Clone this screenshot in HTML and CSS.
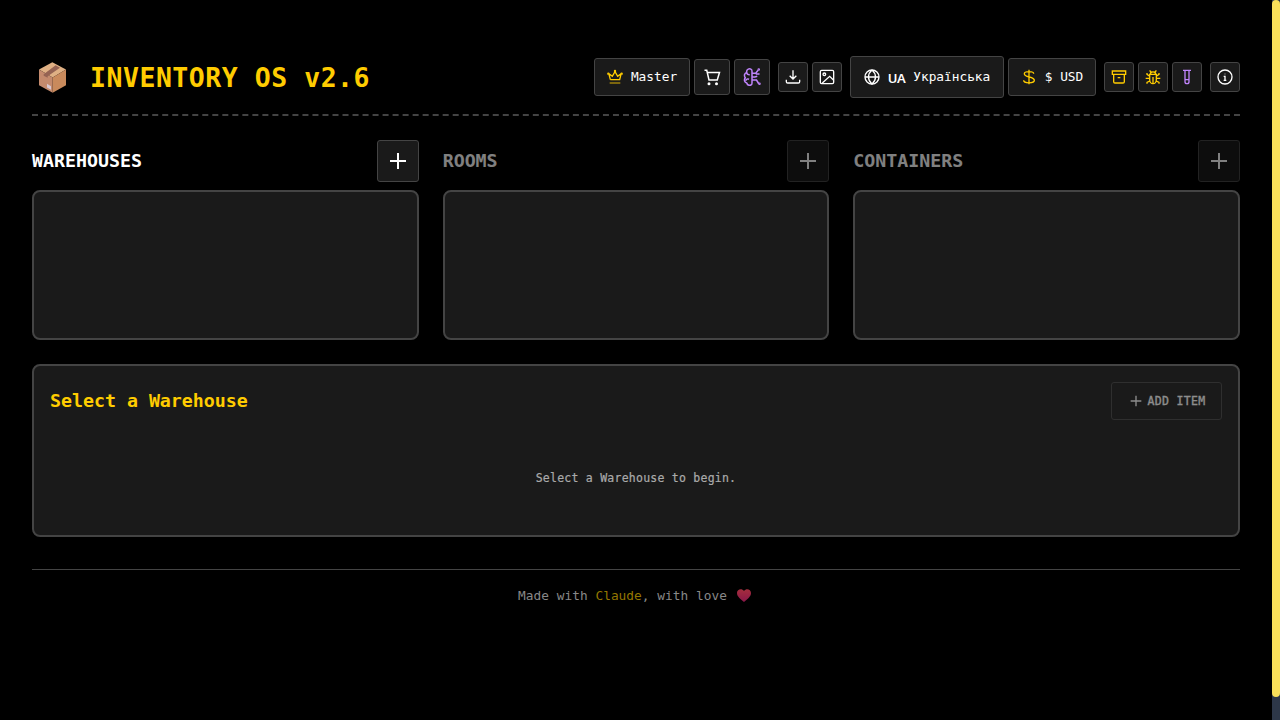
FILE: index.html
```html
<!DOCTYPE html>
<html lang="uk">
<head>
<meta charset="utf-8">
<title>Inventory OS</title>
<link rel="stylesheet" href="styles.css">
</head>
<body>
<main class="page">
  <header class="top">
    <svg class="box" viewBox="0 0 81 92"><path fill="#dfb084" d="M40 0 81 22 41 46 0 22Z"/><path fill="#c48a6d" d="M0 22 41 46V92L0 69Z"/><path fill="#c98a5c" d="M81 22 41 46V92L81 69Z"/><path fill="#956353" d="m14 36 36-27 13 8-37 25v5l-12-6Z"/><path fill="#d8c8d2" d="m24 65 12 7v11l-12-7Z"/></svg>
    <h1>INVENTORY OS v2.6</h1>
    <div class="tools">
      <button class="btn master"><svg class="gold" viewBox="0 0 24 24"><path d="M5 16 3 8M21 8l-2 8H5M3 7l5 4 4-7 4 7 5-4"/><path opacity=".65" d="M4 21h16"/><circle cx="2" cy="7" r=".8"/><circle cx="12" cy="3" r=".8"/><circle cx="22" cy="7" r=".8"/></svg><span>Master</span></button>
      <button class="btn medium"><svg class="cart" viewBox="0 0 24 24"><path d="M2 3h3l3 13h11l3-10H6"/><circle cx="8" cy="21" r="1"/><circle cx="18" cy="21" r="1"/></svg></button>
      <button class="btn medium violet"><svg class="brain" viewBox="0 0 24 24"><path d="M12 3v18M12 3C9-1 4 2 5 6c-3 1-4 4-2 7-2 3-1 6 2 7 1 4 6 4 7 1M5 6c0 2 2 3 4 3M4 17c0-2 2-3 4-2M12 7h5l3-4M12 12h4M17 8h5M12 16h6l3 5M16 12l3-1"/><circle cx="21" cy="2" r=".7"/><circle cx="22" cy="21" r=".7"/></svg></button>
      <button class="btn small gap"><svg viewBox="0 0 24 24"><path d="M12 2v12M7 10l5 5 5-5M2 16v3q0 2 2 2h16q2 0 2-2v-3"/></svg></button>
      <button class="btn small"><svg viewBox="0 0 24 24"><rect x="2" y="2" width="20" height="20" rx="2"/><circle cx="8" cy="8" r="2"/><path d="m5 21 11-10 6 6"/></svg></button>
      <button class="btn lang gap"><svg viewBox="0 0 24 24"><circle cx="12" cy="12" r="10.5"/><path d="M1.5 12h21M12 1.5c-7 6-7 15 0 21 7-6 7-15 0-21"/></svg><span class="code">UA</span><span>Українська</span></button>
      <button class="btn currency"><svg class="gold" viewBox="0 0 24 24"><path d="M12 1v22M19 7c0-4-14-4-14 0 0 6 15 4 15 10 0 5-16 5-16 0"/></svg><span>$ USD</span></button>
      <button class="btn small gold gap"><svg viewBox="0 0 24 24"><path d="M2 3h20v5H2ZM4 8v11q0 2 2 2h12q2 0 2-2V8M10 13h4"/></svg></button>
      <button class="btn small gold"><svg viewBox="0 0 24 24"><path d="M7 8h10v8a5 6 0 0 1-10 0ZM8 8c0-5 8-5 8 0M12 12v10M9 5 7 2M15 5l2-3M7 11 3 8V6M17 11l4-3V6M7 14H1M17 14h6M7 18l-4 2v2M17 18l4 2v2"/></svg></button>
      <button class="btn small violet"><svg viewBox="0 0 24 24"><path d="M6 2h12M9 2v17a3 3 0 0 0 6 0V2M9 16h6"/></svg></button>
      <button class="btn small gap"><svg viewBox="0 0 24 24"><circle cx="12" cy="12" r="10.5"/><path d="M10 11h2v6M10 17h4M12 7v1"/></svg></button>
    </div>
  </header>
  <div class="columns">
    <section><div class="head"><h2>WAREHOUSES</h2><button class="add"><svg viewBox="0 0 24 24"><path d="M12 4v16M4 12h16"/></svg></button></div><div class="panel list"></div></section>
    <section><div class="head off"><h2>ROOMS</h2><button class="add"><svg viewBox="0 0 24 24"><path d="M12 4v16M4 12h16"/></svg></button></div><div class="panel list"></div></section>
    <section><div class="head off"><h2>CONTAINERS</h2><button class="add"><svg viewBox="0 0 24 24"><path d="M12 4v16M4 12h16"/></svg></button></div><div class="panel list"></div></section>
  </div>
  <section class="panel items">
    <div class="items-head"><h2>Select a Warehouse</h2><button class="btn add-item"><svg viewBox="0 0 24 24"><path d="M12 4v16M4 12h16"/></svg><span>ADD ITEM</span></button></div>
    <p>Select a Warehouse to begin.</p>
  </section>
  <footer><span>Made with <b>Claude</b>, with love</span><svg class="heart" viewBox="0 0 14 13"><defs><linearGradient id="h" x2="0" y2="1"><stop stop-color="#a52e3d"/><stop offset="1" stop-color="#8a1749"/></linearGradient></defs><path fill="url(#h)" d="M7 13C4 10 0 8 0 4-.1 0 5-1 7 2c2-3 7-2 7 2 0 4-4 6-7 9Z"/></svg></footer>
</main>
<div class="scroll"><div class="thumb"></div></div>
</body>
</html>
```
FILE: styles.css
```css
* { box-sizing: border-box; }
body { margin: 0; height: 720px; display: flex; overflow: hidden; background: #000; color: #fff; font-family: "DejaVu Sans Mono", monospace; }
h1, h2, p { margin: 0; }
.page { flex: 1; padding: 40px 32px 0; }
.top { height: 76px; display: flex; align-items: center; border-bottom: 2px dashed #444; }
.box { width: 27px; height: 31px; margin: 0 24px 0 7px; }
h1 { font-size: 26.5px; letter-spacing: .52px; line-height: 36px; padding-top: 1px; color: #fc0; white-space: nowrap; }
.tools { margin-left: auto; display: flex; align-items: center; gap: 4px; }
button { font: inherit; color: #fff; padding: 0; }
.btn { display: flex; align-items: center; justify-content: center; background: #1a1a1a; border: 1px solid #444; border-radius: 3px; font-size: 12.8px; letter-spacing: 0; }
svg { flex: none; }
button svg { width: 16px; height: 16px; fill: none; stroke: currentColor; stroke-width: 2; }
.btn span { position: relative; top: -1px; white-space: nowrap; }
.master { width: 96px; height: 38px; gap: 8px; }
.medium { width: 36px; height: 36px; }
button .cart, button .brain { width: 18px; height: 18px; }
.small { width: 30px; height: 30px; }
.gap { margin-left: 4px; }
.lang { width: 154px; height: 42px; gap: 8px; }
.btn .code { top: 1px; font: 600 13px "Noto Sans", sans-serif; letter-spacing: -.4px; }
.currency { width: 88px; height: 38px; gap: 8px; }
.gold { color: #fc0; }
.violet { color: #c084fc; }
.columns { display: grid; grid-template-columns: repeat(3, 1fr); gap: 24px; padding-top: 24px; }
.head { height: 42px; margin-bottom: 8px; display: flex; justify-content: space-between; align-items: center; }
h2 { font-size: 18.3px; line-height: 26px; letter-spacing: -.02px; }
.head.off { opacity: .5; }
.add { display: grid; place-items: center; width: 42px; height: 42px; background: #1a1a1a; border: 1px solid #444; border-radius: 3px; }
button.add svg { width: 24px; height: 24px; }
.panel { background: #1a1a1a; border: 2px solid #444; border-radius: 8px; }
.list { height: 150px; }
.items { height: 173px; margin-top: 24px; padding: 16px; }
.items-head { display: flex; justify-content: space-between; height: 38px; align-items: center; }
.items h2 { color: #fc0; }
.add-item { width: 111px; height: 38px; gap: 4px; font-size: 11.5px; letter-spacing: .3px; opacity: .5; -webkit-text-stroke: .3px; }
.add-item span { top: 0; }
.items p { margin-top: 48px; font-size: 11.5px; line-height: 21px; letter-spacing: .24px; color: #aaa; text-align: center; -webkit-text-stroke: .2px; }
footer { margin-top: 32px; border-top: 1px solid #444; height: 51px; padding-right: 3px; display: flex; align-items: center; justify-content: center; gap: 10px; font-size: 12.8px; letter-spacing: .04px; color: #888; }
footer b { font-weight: 400; color: #947600; }
.heart { width: 14px; height: 13px; }
.scroll { width: 8px; background: #2d3748; }
.thumb { height: 697px; border-radius: 4px; background: #f9df59; }
```
